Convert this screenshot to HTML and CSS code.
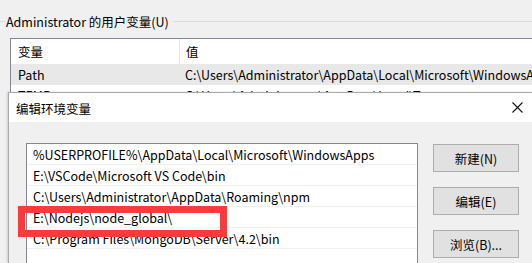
FILE: index.html
```html
<!DOCTYPE html>
<html>
<head>
<meta charset="utf-8">
<link rel="stylesheet" href="styles.css">
</head>
<body>
<div class="window">
  <div class="group-title">
    <span class="gline short"></span>
    <span class="gtext">Administrator 的用户变量(U)</span>
    <span class="gline long"></span>
  </div>
  <div class="uvlist">
    <div class="uvrow head">
      <div class="c1">变量</div>
      <div class="c2">值</div>
    </div>
    <div class="uvrow sel">
      <div class="c1">Path</div>
      <div class="c2">C:\Users\Administrator\AppData\Local\Microsoft\WindowsApps;</div>
    </div>
    <div class="uvrow">
      <div class="c1">TEMP</div>
      <div class="c2">C:\Users\Administrator\AppData\Local\Temp</div>
    </div>
  </div>
</div>

<div class="dialog">
  <div class="titlebar">
    <span class="title">编辑环境变量</span>
    <svg class="close" width="11" height="11" viewBox="0 0 11 11"><path d="M0.5 0.5 L10.5 10.5 M10.5 0.5 L0.5 10.5" stroke="#111" stroke-width="1.1" fill="none"/></svg>
  </div>
  <div class="dbody">
    <div class="plist">
      <div class="prow">%USERPROFILE%\AppData\Local\Microsoft\WindowsApps</div>
      <div class="prow">E:\VSCode\Microsoft VS Code\bin</div>
      <div class="prow">C:\Users\Administrator\AppData\Roaming\npm</div>
      <div class="prow">E:\Nodejs\node_global\</div>
      <div class="prow">C:\Program Files\MongoDB\Server\4.2\bin</div>
      <div class="prow"></div>
    </div>
    <div class="buttons">
      <div class="btn">新建(N)</div>
      <div class="btn">编辑(E)</div>
      <div class="btn">浏览(B)...</div>
    </div>
  </div>
</div>

<div class="mark"></div>
</body>
</html>
```

FILE: styles.css
```css
html, body {
  margin: 0;
  padding: 0;
}
html {
  overflow: hidden;
}
body {
  width: 532px;
  height: 263px;
  overflow: hidden;
  position: relative;
  background: #f0f0f0;
  font-family: "Noto Sans CJK SC", "Noto Sans", sans-serif;
  font-size: 12.5px;
  color: #000;
}
.window {
  padding-top: 11px;
}
.group-title {
  display: flex;
  align-items: center;
  height: 20px;
}
.gline {
  height: 1px;
  background: #dcdcdc;
  align-self: center;
}
.gline.short { width: 5px; }
.gline.long { flex: 1; margin-left: 4px; }
.gtext {
  padding-left: 1px;
  color: #000;
  white-space: nowrap;
}
.uvlist {
  margin-left: 10px;
  margin-top: 7px;
  border: 1px solid #828790;
  border-right: none;
  background: #fff;
  white-space: nowrap;
  overflow: hidden;
  height: 60px;
}
.uvrow {
  display: flex;
  height: 21px;
  align-items: center;
}
.uvrow.head {
  height: 25px;
}
.uvrow.head .c1 {
  border-right: 1px solid #e5e5e5;
  align-self: stretch;
  display: flex;
  align-items: center;
}
.uvrow.sel {
  background: #e8e8e8;
}
.c1 {
  width: 161px;
  padding-left: 7px;
  flex: none;
}
.c2 {
  padding-left: 6px;
}
.dialog {
  position: absolute;
  left: 8px;
  top: 92px;
  width: 523px;
  height: 170px;
  background: #f0f0f0;
  border: 1px solid #aaaaaa;
  border-right: none;
  border-bottom: none;
  box-shadow: -1px 0 2px rgba(0,0,0,0.15);
  overflow: hidden;
}
.titlebar {
  height: 29px;
  background: #fff;
  display: flex;
  align-items: center;
  justify-content: space-between;
  padding-left: 7px;
  padding-right: 9px;
}
.title {
  padding-top: 1px;
}
.close {
  display: block;
}
.dbody {
  display: flex;
  padding-top: 21px;
  padding-left: 17px;
}
.plist {
  width: 390px;
  height: 120px;
  background: #fff;
  border: 1px solid #828790;
  border-bottom: none;
  white-space: nowrap;
  overflow: hidden;
}
.prow {
  height: 20px;
  border-bottom: 1px solid #f0f0f0;
  padding-left: 6px;
  display: flex;
  align-items: center;
}
.buttons {
  margin-left: 15px;
  display: flex;
  flex-direction: column;
  gap: 15px;
  padding-top: 1px;
}
.btn {
  width: 84px;
  height: 26px;
  background: #e1e1e1;
  border: 1px solid #adadad;
  display: flex;
  align-items: center;
  justify-content: center;
}
.mark {
  position: absolute;
  left: 18px;
  top: 206px;
  width: 195px;
  height: 17px;
  border: 7px solid #f93b3b;
}
```
